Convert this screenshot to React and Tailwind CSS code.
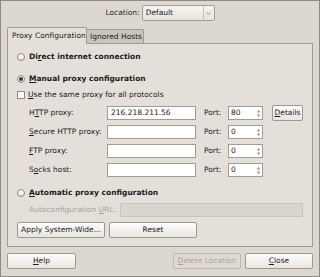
import { ChevronDown } from 'lucide-react'

const font = { fontFamily: '"DejaVu Sans", sans-serif' }

function U({ children }) {
  return <span className="underline underline-offset-[1px]">{children}</span>
}

function Radio({ checked }) {
  return (
    <span className="w-[8px] h-[8px] rounded-full border border-[#8f8b84] bg-gradient-to-b from-[#ffffff] to-[#e6e3de] flex items-center justify-center shrink-0">
      {checked && <span className="w-[4px] h-[4px] rounded-full bg-[#3c3a37]" />}
    </span>
  )
}

function Button({ children, className = '', disabled }) {
  return (
    <div
      className={`h-[16px] flex items-center justify-center whitespace-nowrap rounded-[2px] border ${
        disabled
          ? 'border-[#bdb9b1] bg-[#dedad3] text-[#a9a59d]'
          : 'border-[#9d9991] bg-gradient-to-b from-[#fdfdfc] to-[#e8e5e0] text-[#1a1a1a]'
      } ${className}`}
    >
      {children}
    </div>
  )
}

function Spin({ value }) {
  return (
    <div className="w-[35px] h-[14px] flex items-stretch border border-[#a19d95] bg-white">
      <span className="flex-1 pl-[2px] flex items-center">{value}</span>
      <span className="w-[7px] flex flex-col items-center justify-center text-[#9a968e] text-[4px] leading-[5px]">
        <span>▲</span>
        <span>▼</span>
      </span>
    </div>
  )
}

function ProxyRow({ label, value, port, details }) {
  return (
    <div className="h-[16px] flex items-center">
      <span className="w-[90px] pl-[12px] whitespace-nowrap shrink-0">{label}</span>
      <div className="w-[89px] h-[14px] border border-[#a19d95] bg-white flex items-center pl-[3px]">{value}</div>
      <span className="ml-[8px] w-[24px]">Port:</span>
      <Spin value={port} />
      {details && (
        <Button className="ml-[9px] w-[31px]">
          <span><U>D</U>etails</span>
        </Button>
      )}
    </div>
  )
}

export default function App() {
  return (
    <div
      style={font}
      className="w-[320px] h-[277px] bg-[#dcd8d0] border border-[#8e8a83] text-[7.5px] text-[#1a1a1a] flex flex-col overflow-hidden"
    >
      <div className="mt-[4px] h-[16px] flex items-center justify-center gap-[2px]">
        <span className="text-[#2a2a2a]">Location:</span>
        <div className="w-[73px] h-[16px] flex items-stretch rounded-[2px] border border-[#a29e96] bg-gradient-to-b from-[#f7f5f2] to-[#e6e2dc]">
          <span className="flex-1 flex items-center pl-[3px]">Default</span>
          <span className="w-[11px] border-l border-[#c6c2ba] flex items-center justify-center text-[#6a665f]">
            <ChevronDown size={7} strokeWidth={2.5} />
          </span>
        </div>
      </div>

      <div className="ml-[6px] mt-[6px] flex items-end">
        <div className="w-[80px] h-[17px] border border-b-0 border-[#a09c94] bg-[#e4e0d9] flex items-center pl-[4px] rounded-t-[2px] -mb-px relative whitespace-nowrap">
          Proxy Configuration
        </div>
        <div className="w-[57px] h-[14px] border border-b-0 border-l-0 border-[#a09c94] bg-[#c9c5bd] flex items-center pl-[3px] rounded-tr-[2px] whitespace-nowrap">
          Ignored Hosts
        </div>
      </div>

      <div className="ml-[6px] w-[306px] h-[204px] border border-[#a09c94] bg-[#e4e0d9] pl-[9px] pt-[6px] flex flex-col">
        <div className="h-[14px] flex items-center gap-[4px] font-bold">
          <Radio />
          <span>Di<U>r</U>ect internet connection</span>
        </div>
        <div className="mt-[8px] h-[14px] flex items-center gap-[4px] font-bold">
          <Radio checked />
          <span><U>M</U>anual proxy configuration</span>
        </div>
        <div className="mt-[2px] h-[14px] flex items-center gap-[3px]">
          <span className="w-[8px] h-[8px] border border-[#8f8b84] bg-white shrink-0" />
          <span><U>U</U>se the same proxy for all protocols</span>
        </div>
        <div className="mt-[3px] flex flex-col gap-[3px]">
          <ProxyRow label={<span>H<U>T</U>TP proxy:</span>} value="216.218.211.56" port="80" details />
          <ProxyRow label={<span><U>S</U>ecure HTTP proxy:</span>} value="" port="0" />
          <ProxyRow label={<span><U>F</U>TP proxy:</span>} value="" port="0" />
          <ProxyRow label={<span>S<U>o</U>cks host:</span>} value="" port="0" />
        </div>
        <div className="mt-[8px] h-[14px] flex items-center gap-[4px] font-bold">
          <Radio />
          <span><U>A</U>utomatic proxy configuration</span>
        </div>
        <div className="mt-[3px] h-[14px] flex items-center">
          <span className="w-[103px] pl-[12px] text-[#a6a29a] whitespace-nowrap shrink-0">Autoconfiguration <U>U</U>RL:</span>
          <div className="w-[183px] h-[14px] border border-[#c8c4bc] bg-[#dad6cf] rounded-[1px]" />
        </div>
        <div className="mt-[5px] flex gap-[4px]">
          <Button className="w-[88px]">Apply System-Wide...</Button>
          <Button className="w-[88px]">Reset</Button>
        </div>
      </div>

      <div className="mt-[6px] px-[6px] flex">
        <Button className="w-[69px]"><span><U>H</U>elp</span></Button>
        <Button disabled className="ml-auto w-[68px]"><span><U>D</U>elete Location</span></Button>
        <Button className="ml-[4px] w-[68px]"><span><U>C</U>lose</span></Button>
      </div>
    </div>
  )
}
